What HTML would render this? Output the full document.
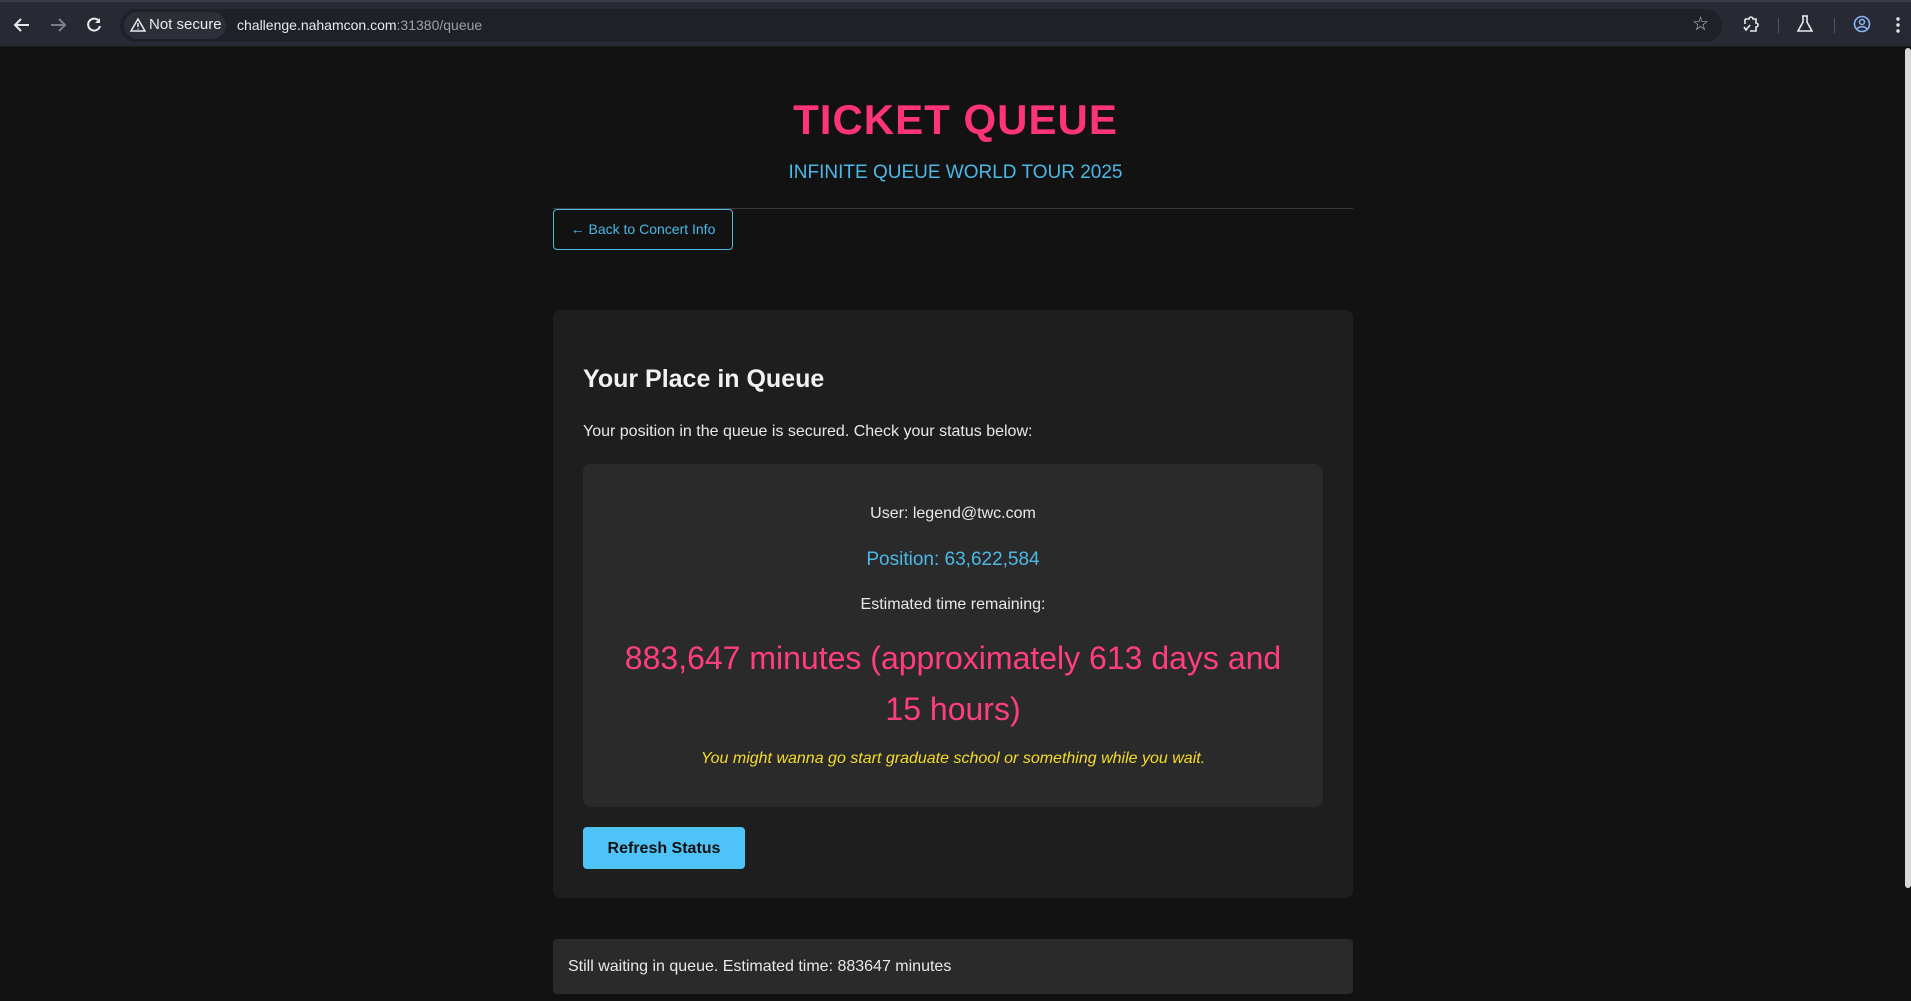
<!DOCTYPE html>
<html><head><meta charset="utf-8"><style>
*{margin:0;padding:0;box-sizing:border-box}
html,body{width:1911px;height:1001px;overflow:hidden;background:#121212;font-family:"Liberation Sans",Arial,sans-serif;color:#e8e8e8}
.bar{position:absolute;left:0;top:0;width:1911px;height:47px;background:#272a33;border-top:2px solid #3a3d46;border-bottom:1px solid #1a1a1a}
.omni{position:absolute;left:120px;top:7px;width:1602px;height:33px;background:#1f2129;border-radius:17px}
.ns{position:absolute;left:124px;top:10px;height:27px;width:102px;background:#2c2f38;border-radius:14px}
.t{position:absolute;white-space:nowrap}
.c{position:absolute;left:0;width:1911px;text-align:center}
</style></head><body>
<div class="bar">
<div class="omni"></div><div class="ns"></div>
<svg style="position:absolute;left:13px;top:15px" width="18" height="16" viewBox="0 0 18 16"><path d="M16 8H3M8 2L2 8l6 6" stroke="#e8eaed" stroke-width="2" fill="none"/></svg>
<svg style="position:absolute;left:49px;top:15px" width="18" height="16" viewBox="0 0 18 16"><path d="M2 8h13M10 2l6 6-6 6" stroke="#7d7f86" stroke-width="2" fill="none"/></svg>
<svg style="position:absolute;left:85px;top:14px" width="18" height="18" viewBox="0 0 18 18"><path d="M14 5A6 6 0 1 0 15 10" stroke="#e8eaed" stroke-width="2" fill="none"/><path d="M15 2v5h-5z" fill="#e8eaed"/></svg>
<svg style="position:absolute;left:130px;top:16px" width="16" height="14" viewBox="0 0 16 14"><path d="M8 1L1 13h14z" stroke="#e8eaed" stroke-width="1.5" fill="none"/><path d="M8 5v4M8 10.5v1" stroke="#e8eaed" stroke-width="1.5"/></svg>
<div class="t" style="left:149px;top:14px;font-size:15px;color:#e8eaed">Not secure</div>
<div class="t" style="left:237px;top:15px;font-size:14px;color:#e8eaed">challenge.nahamcon.com<span style="color:#9aa0a6">:31380/queue</span></div>
<div class="t" style="left:1692px;top:11px;font-size:19px;color:#c4c7cc">☆</div>
<svg style="position:absolute;left:1742px;top:13px" width="18" height="18" viewBox="0 0 18 18"><path d="M3 4h4a2 2 0 0 1 4 0h3v4a2 2 0 0 1 0 4v4H8M3 4v5M2 12l2 3 4-5" stroke="#e8eaed" stroke-width="1.6" fill="none"/></svg>
<div style="position:absolute;left:1778px;top:16px;width:1px;height:15px;background:#555"></div>
<svg style="position:absolute;left:1797px;top:13px" width="16" height="18" viewBox="0 0 16 18"><path d="M5 1h6M6 1v6L1 16h14L10 7V1" stroke="#e8eaed" stroke-width="1.6" fill="none"/></svg>
<div style="position:absolute;left:1834px;top:16px;width:1px;height:15px;background:#555"></div>
<svg style="position:absolute;left:1853px;top:13px" width="18" height="18" viewBox="0 0 18 18"><circle cx="9" cy="9" r="7.5" stroke="#8ab4f8" stroke-width="1.6" fill="none"/><circle cx="9" cy="7" r="2.5" stroke="#8ab4f8" stroke-width="1.5" fill="none"/><path d="M4 14c2-3 8-3 10 0" stroke="#8ab4f8" stroke-width="1.5" fill="none"/></svg>
<svg style="position:absolute;left:1896px;top:14px" width="4" height="18" viewBox="0 0 4 18"><circle cx="2" cy="3" r="1.7" fill="#e8eaed"/><circle cx="2" cy="9" r="1.7" fill="#e8eaed"/><circle cx="2" cy="15" r="1.7" fill="#e8eaed"/></svg>
</div>
<div style="position:absolute;left:1905px;top:48px;width:6px;height:840px;background:#d9d9d9;border-radius:3px"></div>

<div class="c" style="top:96px;font-size:42px;font-weight:bold;color:#ff3377;letter-spacing:1px">TICKET QUEUE</div>
<div class="c" style="top:162px;font-size:19px;color:#4cb8e6">INFINITE QUEUE WORLD TOUR 2025</div>
<div style="position:absolute;left:553px;top:208px;width:800px;height:1px;background:#3a3a3a"></div>
<div style="position:absolute;left:553px;top:209px;width:180px;height:41px;border:1px solid #4cb8e6;border-radius:4px;color:#4cb8e6;font-size:14px;line-height:39px;text-align:center">← Back to Concert Info</div>

<div style="position:absolute;left:553px;top:310px;width:800px;height:588px;background:#1e1e1e;border-radius:8px"></div>
<div class="t" style="left:583px;top:365px;font-size:25px;font-weight:bold;color:#f2f2f2">Your Place in Queue</div>
<div class="t" style="left:583px;top:423px;font-size:16px;color:#e8e8e8">Your position in the queue is secured. Check your status below:</div>
<div style="position:absolute;left:583px;top:464px;width:740px;height:343px;background:#2a2a2a;border-radius:8px"></div>
<div class="c" style="left:583px;width:740px;top:505px;font-size:16px;color:#e8e8e8">User: legend@twc.com</div>
<div class="c" style="left:583px;width:740px;top:549px;font-size:19px;color:#4cb8e6">Position: 63,622,584</div>
<div class="c" style="left:583px;width:740px;top:596px;font-size:16px;color:#e8e8e8">Estimated time remaining:</div>
<div class="c" style="left:583px;width:740px;top:633px;font-size:32px;line-height:51px;color:#ff3d7f">883,647 minutes (approximately 613 days and<br>15 hours)</div>
<div class="c" style="left:583px;width:740px;top:750px;font-size:16px;font-style:italic;color:#f5dc2a">You might wanna go start graduate school or something while you wait.</div>
<div style="position:absolute;left:583px;top:827px;width:162px;height:42px;background:#4fc3f7;border-radius:4px;color:#111;font-size:16px;font-weight:bold;line-height:43px;text-align:center">Refresh Status</div>

<div style="position:absolute;left:553px;top:939px;width:800px;height:55px;background:#2a2a2a;border-radius:4px"></div>
<div class="t" style="left:568px;top:958px;font-size:16px;color:#e8e8e8">Still waiting in queue. Estimated time: 883647 minutes</div>
</body></html>
